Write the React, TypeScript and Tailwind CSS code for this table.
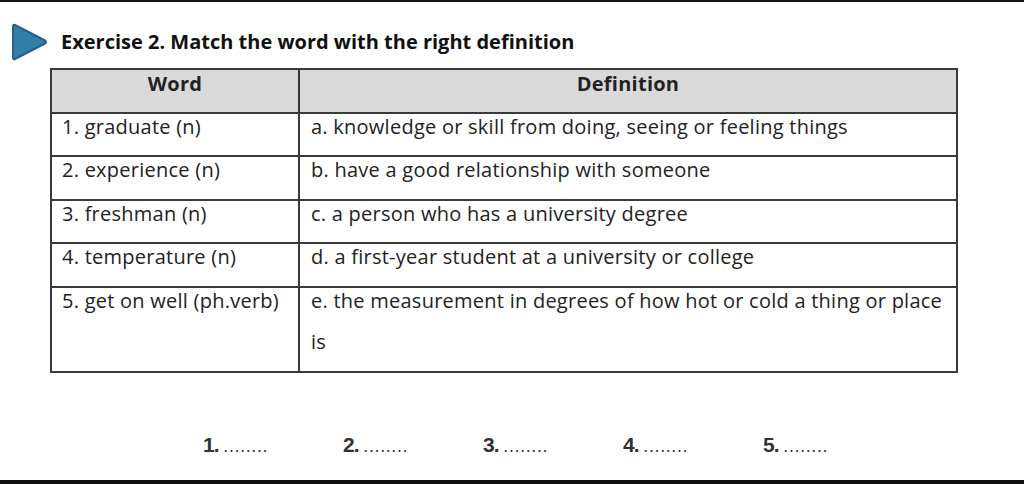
const rows = [
  { word: "1. graduate (n)", def: "a. knowledge or skill from doing, seeing or feeling things" },
  { word: "2. experience (n)", def: "b. have a good relationship with someone" },
  { word: "3. freshman (n)", def: "c. a person who has a university degree" },
  { word: "4. temperature (n)", def: "d. a first-year student at a university or college" },
  { word: "5. get on well (ph.verb)", def: "e. the measurement in degrees of how hot or cold a thing or place is" },
];

function Arrow() {
  return (
    <svg width="38" height="40" viewBox="0 0 38 40" className="shrink-0">
      <path
        d="M4 3 Q2 2 2 5 L2 35 Q2 38 4 37 L34 21.5 Q36 20 34 18.5 Z"
        fill="#2e80a9"
        stroke="#2a5d86"
        strokeWidth="2"
        strokeLinejoin="round"
      />
    </svg>
  );
}

export default function App() {
  return (
    <div className="flex h-[484px] w-[1024px] flex-col bg-white font-['Open_Sans','Liberation_Sans',sans-serif] text-[#222] [font-variant-ligatures:none]">
      <div className="h-[2px] bg-[#111]" />

      <div className="flex items-center gap-[12px] pl-[11px] pt-[20px]">
        <Arrow />
        <h1 className="text-[20px] font-bold leading-[24px] text-[#111]">
          Exercise 2. Match the word with the right definition
        </h1>
      </div>

      <div className="ml-[50px] mt-[6px] grid w-[908px] grid-cols-[246px_1fr] gap-[2px] border-2 border-[#3a3a3a] bg-[#3a3a3a] text-[20px] tracking-[0.25px]">
        <div className="bg-[#d9d9d9] pb-[7px] text-center font-bold">
          <div className="-mt-[7px] leading-[41.5px]">Word</div>
        </div>
        <div className="bg-[#d9d9d9] pb-[7px] text-center font-bold">
          <div className="-mt-[7px] leading-[41.5px]">Definition</div>
        </div>
        {rows.map((r) => (
          <>
            <div key={r.word} className="bg-white pb-[8px] pl-[10px]">
              <div className="-mt-[8px] leading-[41.5px]">{r.word}</div>
            </div>
            <div key={r.def} className="bg-white pb-[8px] pl-[11px] pr-[6px]">
              <div className="-mt-[8px] leading-[41.5px]">{r.def}</div>
            </div>
          </>
        ))}
      </div>

      <div className="mt-[56px] flex pl-[203px] font-['Liberation_Sans',sans-serif] text-[21px] font-bold tracking-[-1px] text-[#333]">
        {[1, 2, 3, 4, 5].map((n) => (
          <div key={n} className="w-[140px]">
            {n}. <span className="text-[18px] font-normal tracking-[0.6px]">........</span>
          </div>
        ))}
      </div>

      <div className="mt-auto h-[4px] bg-[#111]" />
    </div>
  );
}
